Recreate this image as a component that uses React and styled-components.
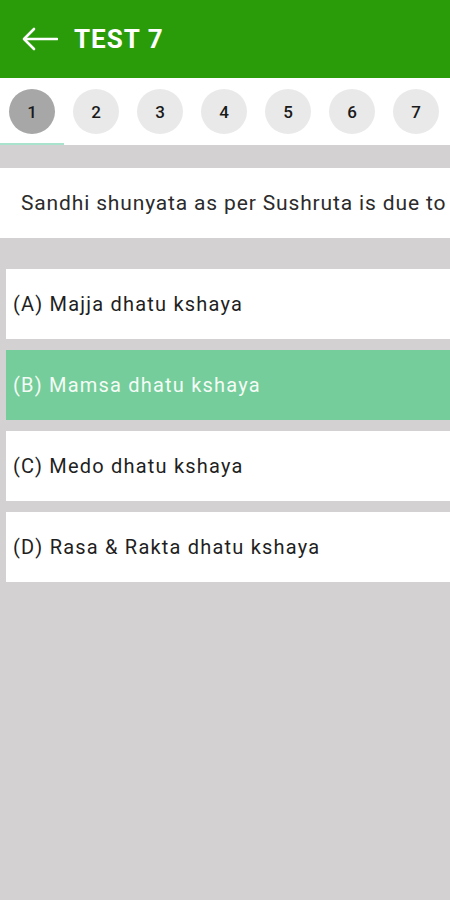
import React from "react";
import styled, { createGlobalStyle } from "styled-components";

const GlobalStyle = createGlobalStyle`
  html, body { margin: 0; padding: 0; }
  body { font-family: Roboto, "Liberation Sans", sans-serif; background: #d3d1d1; }
`;

const Screen = styled.div`
  width: 450px;
  height: 900px;
  overflow: hidden;
  background: #d3d1d1;
  display: flex;
  flex-direction: column;
`;

const Header = styled.header`
  height: 78px;
  background: #2a9c0a;
  display: flex;
  align-items: center;
  padding-left: 22px;
  gap: 16px;
  box-sizing: border-box;
`;

const Title = styled.h1`
  margin: 0;
  color: #fff;
  font-size: 26px;
  font-weight: 700;
  letter-spacing: 1px;
`;

const Tabs = styled.div`
  height: 67px;
  background: #fff;
  display: flex;
  align-items: stretch;
`;

const Tab = styled.div`
  width: 64px;
  flex: none;
  display: flex;
  align-items: center;
  justify-content: center;
  border-bottom: 2px solid ${(p) => (p.$active ? "#a9e2cd" : "transparent")};
  box-sizing: border-box;
`;

const Circle = styled.div`
  width: 46px;
  height: 45px;
  border-radius: 50%;
  background: ${(p) => (p.$active ? "#a7a7a7" : "#e9e9e9")};
  display: flex;
  align-items: center;
  justify-content: center;
  font-size: 17px;
  font-weight: 500;
  color: #1a1a1a;
  margin-top: 2px;
`;

const Question = styled.div`
  margin-top: 23px;
  height: 70px;
  background: #fff;
  display: flex;
  align-items: center;
  padding-left: 21px;
  font-size: 21px;
  letter-spacing: 0.85px;
  color: #2b2b2b;
  white-space: nowrap;
  overflow: hidden;
`;

const Options = styled.div`
  margin-top: 31px;
  padding-left: 6px;
  display: flex;
  flex-direction: column;
  gap: 11px;
`;

const Option = styled.div`
  height: 70px;
  background: ${(p) => (p.$selected ? "#74cd9a" : "#fff")};
  color: ${(p) => (p.$selected ? "#f4fbf6" : "#1f1f1f")};
  display: flex;
  align-items: center;
  padding-left: 7px;
  font-size: 20px;
  letter-spacing: 1.2px;
`;

const BackArrow = () => (
  <svg width="36" height="24" viewBox="0 0 36 24" fill="none" stroke="#fff" strokeWidth="2.6" strokeLinecap="round" strokeLinejoin="round">
    <path d="M35 12H3" />
    <path d="M12 2L2 12l10 10" />
  </svg>
);

const options = [
  "(A) Majja dhatu kshaya",
  "(B) Mamsa dhatu kshaya",
  "(C) Medo dhatu kshaya",
  "(D) Rasa & Rakta dhatu kshaya",
];

export default function App() {
  return (
    <>
      <GlobalStyle />
      <Screen>
        <Header>
          <BackArrow />
          <Title>TEST 7</Title>
        </Header>
        <Tabs>
          {[1, 2, 3, 4, 5, 6, 7].map((n) => (
            <Tab key={n} $active={n === 1}>
              <Circle $active={n === 1}>{n}</Circle>
            </Tab>
          ))}
        </Tabs>
        <Question>Sandhi shunyata as per Sushruta is due to</Question>
        <Options>
          {options.map((o, i) => (
            <Option key={o} $selected={i === 1}>{o}</Option>
          ))}
        </Options>
      </Screen>
    </>
  );
}
